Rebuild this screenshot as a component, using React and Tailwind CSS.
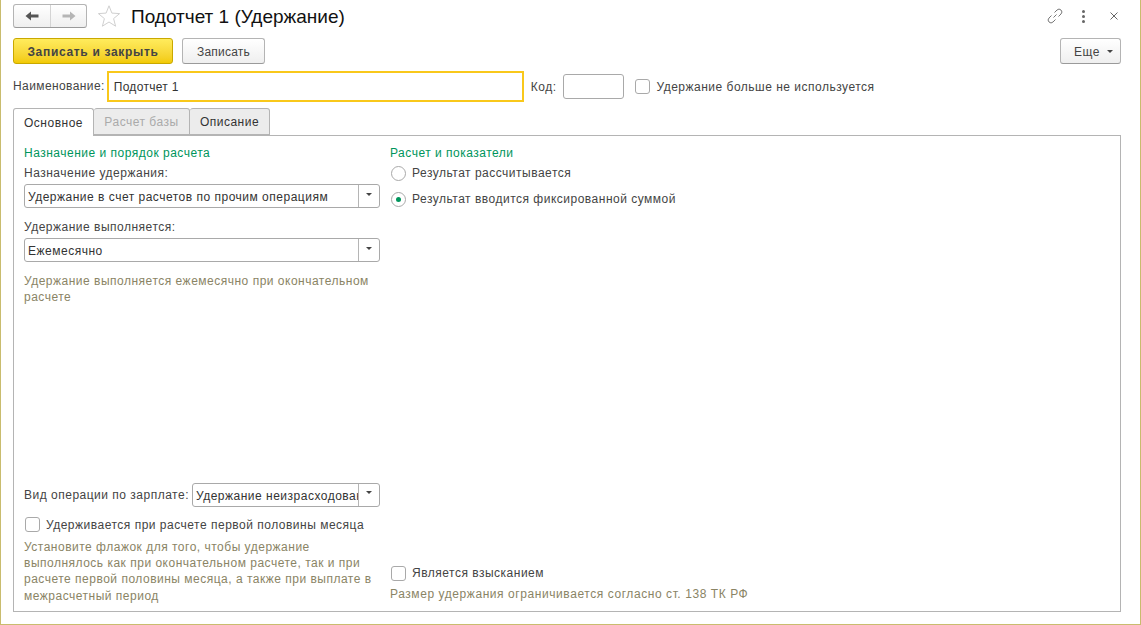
import React from 'react';

function Caret() {
  return <div className="w-0 h-0 border-x-[3px] border-x-transparent border-t-[3px] border-t-[#444]"></div>;
}

function Select({ value, className }) {
  return (
    <div className={`h-6 flex rounded-[3px] border border-[#a9a9a9] bg-white overflow-hidden ${className}`}>
      <div className="flex-1 min-w-0 pl-[3px] leading-[24px] text-[#333] whitespace-nowrap overflow-hidden">{value}</div>
      <div className="w-[21px] shrink-0 border-l border-[#b5b5b5] flex items-center justify-center pb-1">
        <Caret />
      </div>
    </div>
  );
}

function Check({ label, className }) {
  return (
    <div className={`flex items-center gap-[6px] h-4 ${className}`}>
      <div className="w-[15px] h-[15px] rounded-[3px] border border-[#a9a9a9] bg-white shrink-0"></div>
      <span className="text-[#444] whitespace-nowrap">{label}</span>
    </div>
  );
}

function Radio({ label, checked, className }) {
  return (
    <div className={`flex items-center gap-[6px] h-4 ${className}`}>
      <div className="w-[15px] h-[15px] rounded-full border border-[#a9a9a9] bg-white shrink-0 flex items-center justify-center">
        {checked && <div className="w-[5px] h-[5px] rounded-full bg-[#00955c]"></div>}
      </div>
      <span className="text-[#444] whitespace-nowrap">{label}</span>
    </div>
  );
}

function GrayButton({ children, className }) {
  return (
    <div className={`h-[26px] pt-[1px] rounded-[3px] border border-[#b4b4b4] border-b-[#9a9a9a] bg-gradient-to-b from-white to-[#efefef] flex items-center justify-center text-[#444] ${className}`}>
      {children}
    </div>
  );
}

export default function App() {
  return (
    <div className="w-[1141px] h-[625px] bg-white border-x border-b border-[#c9bc6e] flex flex-col pl-3 pr-[19px] text-[12px] font-['Liberation_Sans',Arial,sans-serif] tracking-[0.5px] overflow-hidden">
      {/* Header */}
      <div className="h-[38px] shrink-0 flex items-center pb-[6px]">
        <div className="w-[74px] h-[24px] rounded-[3px] border border-[#b4b4b4] border-b-[#9a9a9a] bg-gradient-to-b from-white to-[#efefef] flex">
          <div className="w-[37px] border-r border-[#d4d4d4] flex items-center justify-center">
            <svg width="14" height="12" viewBox="0 0 14 12"><path d="M0.5 6 L6 1.5 V4.5 H13.5 V7.5 H6 V10.5 Z" fill="#555" /></svg>
          </div>
          <div className="flex-1 flex items-center justify-center">
            <svg width="14" height="12" viewBox="0 0 14 12"><path d="M13.5 6 L8 1.5 V4.5 H0.5 V7.5 H8 V10.5 Z" fill="#b5b5b5" /></svg>
          </div>
        </div>
        <svg className="ml-[10px]" width="24" height="24" viewBox="0 0 24 24">
          <path d="M12 1.8 L14.9 9.1 L22.6 9.6 L16.6 14.6 L18.6 22.2 L12 18 L5.4 22.2 L7.4 14.6 L1.4 9.6 L9.1 9.1 Z" fill="none" stroke="#d0d0d0" strokeWidth="1" />
        </svg>
        <h1 className="ml-[10px] mt-[2px] text-[19px] tracking-normal text-[#111] font-normal">Подотчет 1 (Удержание)</h1>
        <div className="ml-auto flex items-center mr-[3px]">
          <svg width="16" height="16" viewBox="0 0 16 16" fill="none" stroke="#777" strokeWidth="1">
            <path d="M6.5 9.5 L9.5 6.5" />
            <path d="M7.5 4.5 L10 2 a2.6 2.6 0 0 1 4 4 L11.5 8.5" />
            <path d="M8.5 11.5 L6 14 a2.6 2.6 0 0 1 -4 -4 L4.5 7.5" />
          </svg>
          <div className="ml-[19px] flex flex-col gap-[2px]">
            <div className="w-[3px] h-[3px] rounded-full bg-[#666]"></div>
            <div className="w-[3px] h-[3px] rounded-full bg-[#666]"></div>
            <div className="w-[3px] h-[3px] rounded-full bg-[#666]"></div>
          </div>
          <svg className="ml-[25px]" width="8" height="8" viewBox="0 0 8 8" stroke="#666" strokeWidth="1"><path d="M0.5 0.5 L7.5 7.5 M7.5 0.5 L0.5 7.5" /></svg>
        </div>
      </div>

      {/* Command bar */}
      <div className="shrink-0 flex items-center">
        <div className="w-[160px] h-[26px] pt-[1px] rounded-[3px] border border-[#c9a800] bg-gradient-to-b from-[#ffec5c] to-[#f2ca00] flex items-center justify-center font-bold text-[#444] tracking-[0.68px]">
          Записать и закрыть
        </div>
        <GrayButton className="ml-[9px] w-[83px] tracking-[0.2px]">Записать</GrayButton>
        <GrayButton className="ml-auto w-[61px] gap-[7px] pl-[6px]">
          Еще <Caret />
        </GrayButton>
      </div>

      {/* Name row */}
      <div className="shrink-0 flex items-center mt-[7px] h-[30px]">
        <span className="text-[#444] whitespace-nowrap tracking-[0.4px]">Наименование:</span>
        <div className="ml-[2px] w-[417px] h-[31px] border-2 border-[#f9c81b] pl-[5px] leading-[28px] text-[#333] tracking-[0.3px]">Подотчет 1</div>
        <span className="ml-[7px] pt-[1px] text-[#444]">Код:</span>
        <div className="ml-[7px] w-[61px] h-[25px] rounded-[3px] border border-[#a9a9a9]"></div>
        <Check className="ml-[11px] pt-[1px]" label="Удержание больше не используется" />
      </div>

      {/* Tabs */}
      <div className="shrink-0 flex mt-[7px] h-[27px] relative z-10">
        <div className="w-[81px] h-[28px] rounded-t-[3px] border border-b-0 border-[#b4b4b4] bg-white flex items-center justify-center text-[#333]">Основное</div>
        <div className="w-[96px] rounded-t-[3px] border border-l-0 border-[#b4b4b4] bg-[#ececec] flex items-center justify-center text-[#aaa]">Расчет базы</div>
        <div className="w-[80px] rounded-t-[3px] border border-l-0 border-[#b4b4b4] bg-[#ececec] flex items-center justify-center text-[#333]">Описание</div>
      </div>

      {/* Panel */}
      <div className="w-[1108px] h-[477px] shrink-0 border border-[#b4b4b4] flex pl-[10px] pt-[9px] pb-[7px]">
        <div className="w-[356px] flex flex-col">
          <div className="text-[#00955c] leading-4">Назначение и порядок расчета</div>
          <div className="text-[#444] leading-4 mt-1">Назначение удержания:</div>
          <Select className="mt-[3px]" value="Удержание в счет расчетов по прочим операциям" />
          <div className="text-[#444] leading-4 mt-[11px]">Удержание выполняется:</div>
          <Select className="mt-[3px]" value="Ежемесячно" />
          <div className="text-[#8a8465] leading-4 mt-[11px]">Удержание выполняется ежемесячно при окончательном расчете</div>

          <div className="mt-auto flex items-center">
            <span className="text-[#444] whitespace-nowrap">Вид операции по зарплате:</span>
            <Select className="ml-[3px] flex-1 min-w-0" value="Удержание неизрасходованных" />
          </div>
          <Check className="mt-[10px] ml-[1px]" label="Удерживается при расчете первой половины месяца" />
          <div className="text-[#8a8465] leading-[16.3px] mt-[6px]">Установите флажок для того, чтобы удержание выполнялось как при окончательном расчете, так и при расчете первой половины месяца, а также при выплате в межрасчетный период</div>
        </div>

        <div className="ml-[10px] flex-1 flex flex-col pb-[2px]">
          <div className="text-[#00955c] leading-4">Расчет и показатели</div>
          <Radio className="mt-1 ml-[1px]" label="Результат рассчитывается" />
          <Radio className="mt-[10px] ml-[1px]" checked label="Результат вводится фиксированной суммой" />
          <Check className="mt-auto ml-[1px]" label="Является взысканием" />
          <div className="text-[#8a8465] leading-4 mt-[5px] tracking-[0.57px]">Размер удержания ограничивается согласно ст. 138 ТК РФ</div>
        </div>
      </div>
    </div>
  );
}
